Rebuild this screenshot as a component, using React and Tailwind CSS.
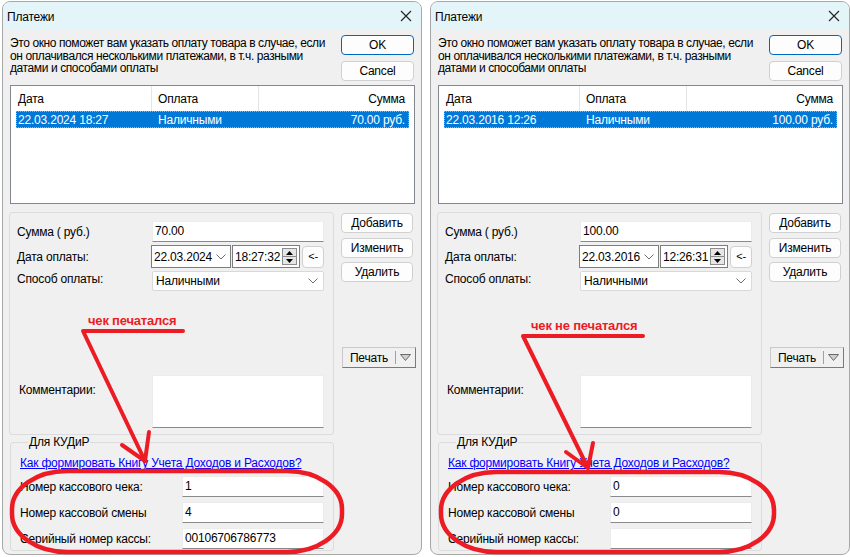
import React from 'react';

const LEFT = {
  date: '22.03.2024 18:27', sum: '70.00 руб.', amount: '70.00', day: '22.03.2024', time: '18:27:32',
  check: '1', shift: '4', serial: '00106706786773',
};
const RIGHT = {
  date: '22.03.2016 12:26', sum: '100.00 руб.', amount: '100.00', day: '22.03.2016', time: '12:26:31',
  check: '0', shift: '0', serial: '',
};

const Chevron = () => (
  <svg width="10" height="6" viewBox="0 0 10 6"><path d="M0.5 0.5 L5 5 L9.5 0.5" stroke="#6b6b6b" fill="none" /></svg>
);

function Btn({ children, primary, className = '' }) {
  return (
    <div className={`flex items-center justify-center rounded-[4px] border bg-[#fdfdfd] ${primary ? 'border-[#0067c0]' : 'border-[#d0d0d0]'} ${className}`}>
      {children}
    </div>
  );
}

function Edit({ value, className = '' }) {
  return (
    <div className={`bg-white border border-[#ececec] border-b-[#8a8a8a] pl-[2px] leading-[15px] pt-[2px] ${className}`}>{value}</div>
  );
}

function Win({ d }) {
  return (
    <div className="w-[420px] h-[554px] flex flex-col shrink-0 bg-[#f0f0f0] border border-[#a8a8a8] rounded-[8px] overflow-hidden">
      {/* title */}
      <div className="h-[28px] shrink-0 bg-[#e4f5f9] flex items-center justify-between pl-[4px] pr-[9px]">
        <span className="pt-[1px]">Платежи</span>
        <svg width="12" height="12" viewBox="0 0 12 12"><path d="M1 1 L11 11 M11 1 L1 11" stroke="#202020" strokeWidth="1.1" /></svg>
      </div>

      <div className="flex-1 flex flex-col pl-[6px] pr-[6px] pt-[5px]">
        {/* description + OK/Cancel */}
        <div className="flex justify-between">
          <p className="w-[330px] pl-[1px] pt-[2px] leading-[12.6px] tracking-[-0.4px]">
            Это окно поможет вам указать оплату товара в случае, если он оплачивался несколькими платежами, в т.ч. разными датами и способами оплаты
          </p>
          <div className="w-[73px] mr-[1px] flex flex-col gap-[6px]">
            <Btn primary className="h-[20px]">OK</Btn>
            <Btn className="h-[20px]">Cancel</Btn>
          </div>
        </div>

        {/* list */}
        <div className="mt-[4px] ml-[1px] h-[119px] bg-white border border-[#828790]">
          <div className="h-[25px] flex">
            <div className="w-[141px] border-r border-[#e5e5e5] pl-[7px] flex items-center">Дата</div>
            <div className="w-[107px] border-r border-[#e5e5e5] pl-[6px] flex items-center">Оплата</div>
            <div className="flex-1 pr-[9px] flex items-center justify-end">Сумма</div>
          </div>
          <div className="mx-[5px] h-[17px] flex items-center bg-[#0078d7] text-white outline-1 outline-dotted outline-[#f0a050] -outline-offset-1">
            <div className="w-[136px] pl-[2px]">{d.date}</div>
            <div className="w-[107px] pl-[6px]">Наличными</div>
            <div className="flex-1 text-right pr-[4px]">{d.sum}</div>
          </div>
        </div>

        {/* main area */}
        <div className="mt-[8px] flex">
          <div className="w-[325px] flex flex-col">
            <div className="h-[223px] border border-[#dcdcdc] rounded-[3px] pt-[8px] pl-[7px] flex flex-col">
              <div className="flex items-center h-[21px]">
                <span className="w-[135px] pt-[1px]">Сумма ( руб.)</span>
                <Edit value={d.amount} className="w-[172px] h-[21px]" />
              </div>
              <div className="flex items-center h-[23px] mt-[3px]">
                <span className="w-[134px]">Дата оплаты:</span>
                <div className="w-[80px] h-[23px] bg-white border border-[#7d7d7d] flex items-center justify-between pl-[2px] pr-[4px]">
                  <span>{d.day}</span><Chevron />
                </div>
                <div className="ml-[1px] w-[68px] h-[23px] bg-white border border-[#7d7d7d] flex items-center justify-between pl-[2px] pr-[2px]">
                  <span>{d.time}</span>
                  <div className="w-[15px] h-[17px] flex flex-col border border-[#8c8c8c]">
                    <div className="flex-1 bg-[#e6e6e6] border-b border-[#8c8c8c] flex items-center justify-center">
                      <svg width="7" height="4" viewBox="0 0 7 4"><path d="M0 4 L3.5 0 L7 4 Z" fill="#000" /></svg>
                    </div>
                    <div className="flex-1 bg-[#e6e6e6] flex items-center justify-center">
                      <svg width="7" height="4" viewBox="0 0 7 4"><path d="M0 0 L3.5 4 L7 0 Z" fill="#000" /></svg>
                    </div>
                  </div>
                </div>
                <Btn className="ml-[2px] w-[22px] h-[22px] text-[11px]">&lt;-</Btn>
              </div>
              <div className="flex items-center h-[20px] mt-[3px]">
                <span className="w-[135px] -mt-[4px]">Способ оплаты:</span>
                <div className="w-[172px] h-[20px] bg-white border border-[#d9d9d9] rounded-[2px] flex items-center justify-between pl-[3px] pr-[5px]">
                  <span>Наличными</span><Chevron />
                </div>
              </div>
              <div className="flex mt-[84px]">
                <span className="w-[135px] pl-[2px] pt-[6px]">Комментарии:</span>
                <div className="w-[172px] h-[53px] bg-white border border-[#ececec] border-b-[#8a8a8a]" />
              </div>
            </div>

            <fieldset className="mt-[1px] ml-[1px] w-[324px] border border-[#dcdcdc] rounded-[3px] pl-[9px] pb-[1px]">
              <legend className="ml-[8px] px-[1px] leading-[13px]">Для КУДиР</legend>
              <div className="mt-[8px] text-[#0000ff] underline leading-[13px]">Как формировать Книгу Учета Доходов и Расходов?</div>
              <div className="mt-[6px] flex flex-col gap-[5px]">
                <div className="flex items-center">
                  <span className="w-[162px] pt-[1px]">Номер кассового чека:</span>
                  <Edit value={d.check} className="w-[142px] h-[21px]" />
                </div>
                <div className="flex items-center">
                  <span className="w-[162px] pt-[1px]">Номер кассовой смены</span>
                  <Edit value={d.shift} className="w-[142px] h-[21px]" />
                </div>
                <div className="flex items-center">
                  <span className="w-[162px] pt-[1px]">Серийный номер кассы:</span>
                  <Edit value={d.serial} className="w-[142px] h-[21px]" />
                </div>
              </div>
            </fieldset>
          </div>

          <div className="ml-[7px] w-[72px] flex flex-col pt-[1px]">
            <Btn className="h-[20px]">Добавить</Btn>
            <Btn className="h-[20px] mt-[5px]">Изменить</Btn>
            <Btn className="h-[20px] mt-[4px]">Удалить</Btn>
            <div className="mt-[65px] ml-[1px] w-[74px] h-[21px] flex bg-[#f0f0f0] border border-[#c8c8c8] border-r-[#7a7a7a] border-b-[#7a7a7a]">
              <div className="w-[52px] flex items-center justify-center">Печать</div>
              <div className="w-px my-[3px] bg-[#a0a0a0]" />
              <div className="flex-1 flex items-center justify-center">
                <svg width="11" height="7" viewBox="0 0 11 7"><path d="M0.5 0.5 L10.5 0.5 L5.5 6.5 Z" fill="#cfcfcf" stroke="#6a6a6a" strokeWidth="1" /></svg>
              </div>
            </div>
          </div>
        </div>
      </div>
    </div>
  );
}

export default function App() {
  return (
    <div className="relative w-[850px] h-[557px] overflow-hidden bg-white text-[12px] tracking-[-0.2px] text-black font-['Liberation_Sans',Arial,sans-serif]">
      <div className="flex pl-[2px] pt-[1px] gap-[8px]">
        <Win d={LEFT} />
        <Win d={RIGHT} />
      </div>

      {/* red annotations drawn over the windows */}
      <svg className="absolute inset-0 pointer-events-none" width="850" height="557" viewBox="0 0 850 557">
        <g stroke="#ed1c24" strokeWidth="4" fill="none" strokeLinecap="round" strokeLinejoin="round">
          <path d="M183 331 L83 331 L145 461" />
          <path d="M122 445 L145 461 L149 432" />
          <rect x="12" y="471" width="330" height="81" rx="55" ry="38" strokeWidth="4.5" />

          <path d="M643 336 L523 336 L588 468" />
          <path d="M566 452 L588 468 L593 443" />
          <rect x="441" y="472" width="333" height="80" rx="55" ry="38" strokeWidth="4.5" />
        </g>
        <text x="88" y="325" fill="#ed1c24" fontSize="13" fontWeight="bold" fontFamily="Liberation Sans, Arial, sans-serif">чек печатался</text>
        <text x="531" y="330" fill="#ed1c24" fontSize="13" fontWeight="bold" fontFamily="Liberation Sans, Arial, sans-serif">чек не печатался</text>
      </svg>
    </div>
  );
}
